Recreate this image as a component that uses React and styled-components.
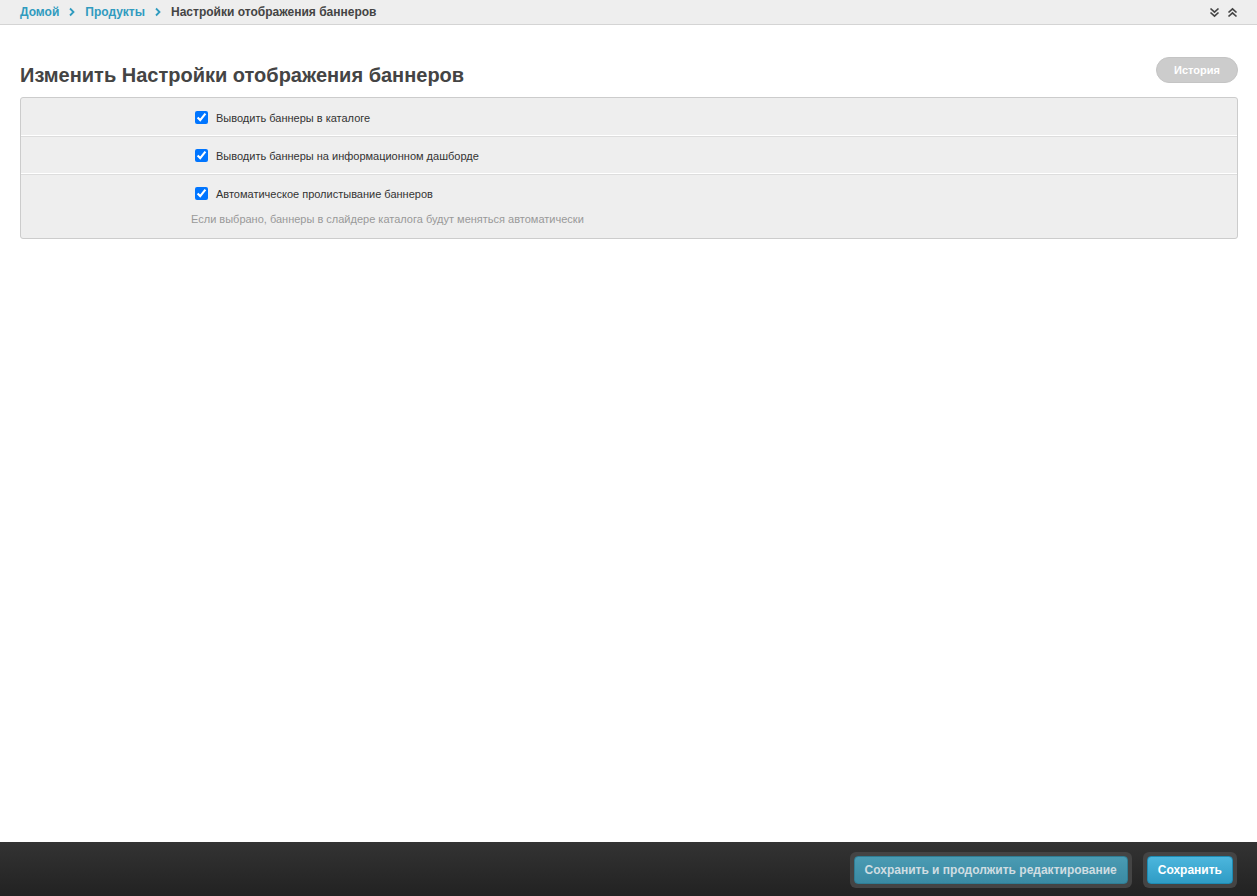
import styled, { createGlobalStyle } from "styled-components";

const Global = createGlobalStyle`
    html, body {
        margin: 0;
        padding: 0;
        height: 100%;
        background: #fff;
        font-family: "Liberation Sans", Arial, sans-serif;
        color: #444;
    }
    #root {
        min-height: 100vh;
        display: flex;
        flex-direction: column;
    }
`;

const Chevron = () => (
    <svg width="8" height="10" viewBox="0 0 8 10">
        <path d="M2 1.5 L5.5 5 L2 8.5" fill="none" stroke="#309bbf" strokeWidth="1.8" />
    </svg>
);

const DoubleChevron = ({ up }) => (
    <svg width="11" height="11" viewBox="0 0 11 11">
        {up ? (
            <path d="M1.5 5.5 L5.5 1.8 L9.5 5.5 M1.5 9.5 L5.5 5.8 L9.5 9.5" fill="none" stroke="#444" strokeWidth="1.7" />
        ) : (
            <path d="M1.5 1.5 L5.5 5.2 L9.5 1.5 M1.5 5.5 L5.5 9.2 L9.5 5.5" fill="none" stroke="#444" strokeWidth="1.7" />
        )}
    </svg>
);

const App = () => {
    const rows = [
        { label: "Выводить баннеры в каталоге" },
        { label: "Выводить баннеры на информационном дашборде" },
        {
            label: "Автоматическое пролистывание баннеров",
            help: "Если выбрано, баннеры в слайдере каталога будут меняться автоматически",
        },
    ];

    return (
        <>
            <Global />
            <Breadcrumbs>
                <div className="trail">
                    <a>Домой</a>
                    <Chevron />
                    <a>Продукты</a>
                    <Chevron />
                    <span>Настройки отображения баннеров</span>
                </div>
                <div className="tools">
                    <DoubleChevron />
                    <DoubleChevron up />
                </div>
            </Breadcrumbs>
            <Content>
                <TitleRow>
                    <h1>Изменить Настройки отображения баннеров</h1>
                    <HistoryButton>История</HistoryButton>
                </TitleRow>
                <Panel>
                    {rows.map((r, i) => (
                        <Row key={i} $last={i === rows.length - 1}>
                            <label>
                                <input type="checkbox" defaultChecked />
                                {r.label}
                            </label>
                            {r.help && <Help>{r.help}</Help>}
                        </Row>
                    ))}
                </Panel>
            </Content>
            <Footer>
                <ButtonWrap>
                    <SubmitButton $secondary>Сохранить и продолжить редактирование</SubmitButton>
                </ButtonWrap>
                <ButtonWrap>
                    <SubmitButton>Сохранить</SubmitButton>
                </ButtonWrap>
            </Footer>
        </>
    );
};

export default App;

const Breadcrumbs = styled.div`
    height: 25px;
    box-sizing: border-box;
    background: #eee;
    border-bottom: 1px solid #d4d4d4;
    display: flex;
    align-items: center;
    justify-content: space-between;
    padding: 0 20px;
    font-size: 12px;
    font-weight: bold;
    .trail {
        display: flex;
        align-items: center;
        gap: 9px;
        a {
            color: #309bbf;
        }
        span {
            color: #444;
        }
    }
    .tools {
        display: flex;
        gap: 7px;
        margin-right: -1px;
    }
`;

const Content = styled.div`
    flex: 1;
    padding: 31px 19px 0 20px;
`;

const TitleRow = styled.div`
    display: flex;
    justify-content: space-between;
    align-items: center;
    height: 33px;
    margin-bottom: 8px;
    h1 {
        margin: 0;
        font-size: 20px;
        font-weight: bold;
        color: #444;
        padding-top: 5px;
    }
`;

const HistoryButton = styled.div`
    width: 82px;
    height: 26px;
    box-sizing: border-box;
    border-radius: 13px;
    background: #ccc;
    border: 1px solid #c4c4c4;
    color: #fff;
    font-size: 11px;
    font-weight: bold;
    display: flex;
    align-items: center;
    justify-content: center;
    margin-top: -6px;
`;

const Panel = styled.div`
    border: 1px solid #ccc;
    border-radius: 3px;
    background: #eee;
`;

const Row = styled.div`
    padding: 13px 0 8px 174px;
    border-bottom: ${(p) => (p.$last ? "none" : "1px solid #fff")};
    box-shadow: ${(p) => (p.$last ? "none" : "0 1px 0 #ddd")};
    min-height: 16px;
    ${(p) => p.$last && "padding-bottom: 13px;"}
    label {
        display: flex;
        align-items: center;
        font-size: 11px;
        color: #333;
        input {
            width: 13px;
            height: 13px;
            margin: 0 8px 0 0;
            accent-color: #0075ff;
        }
    }
`;

const Help = styled.div`
    margin-top: 13px;
    margin-left: -4px;
    font-size: 11px;
    color: #999;
`;

const Footer = styled.div`
    height: 54px;
    background: linear-gradient(#333, #222);
    display: flex;
    justify-content: flex-end;
    align-items: center;
    gap: 11px;
    padding: 0 20px;
    box-sizing: border-box;
`;

const ButtonWrap = styled.div`
    background: #444;
    border-radius: 6px;
    padding: 4px;
    margin-top: 2px;
`;

const SubmitButton = styled.div`
    height: 28px;
    box-sizing: border-box;
    padding: 0 10px;
    border-radius: 4px;
    display: flex;
    align-items: center;
    font-size: 12px;
    font-weight: bold;
    border: 1px solid ${(p) => (p.$secondary ? "#2f7d94" : "#1d8bb3")};
    background: ${(p) => (p.$secondary ? "linear-gradient(#4a9bb3, #3a8aa3)" : "linear-gradient(#4cb6dd, #2f9cc5)")};
    color: ${(p) => (p.$secondary ? "#cfdde2" : "#fff")};
`;
